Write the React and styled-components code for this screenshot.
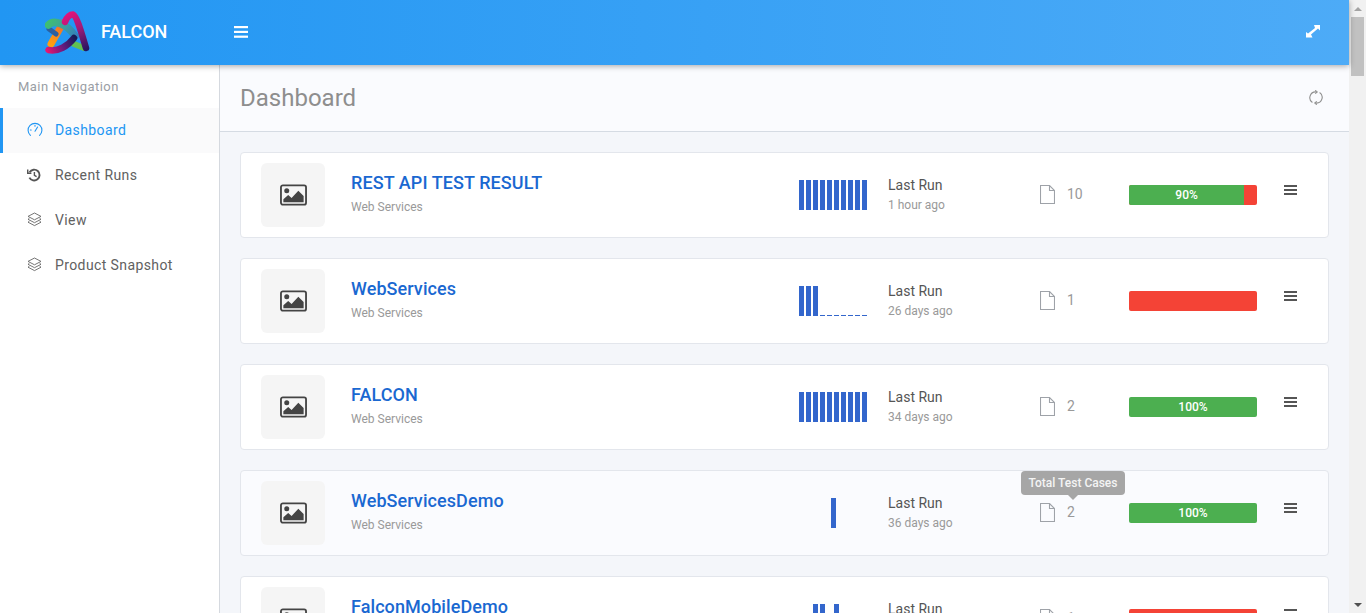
import React from 'react';
import styled, {createGlobalStyle} from 'styled-components';

const GlobalStyle = createGlobalStyle`
  html, body {
    margin: 0;
    height: 100%;
    overflow: hidden;
    font-family: Roboto, "Liberation Sans", sans-serif;
  }
`;

const Page = styled.div`
  display: flex;
  height: 100vh;
`;

const Shell = styled.div`
  flex: 1;
  min-width: 0;
  display: flex;
  flex-direction: column;
  position: relative;
`;

const Header = styled.header`
  height: 65px;
  flex: none;
  display: flex;
  align-items: center;
  box-sizing: border-box;
  background-image: linear-gradient(to right, #2196f3, #4dabf7);
  box-shadow: 0 1px 6px rgba(0, 0, 0, .35);
  position: relative;
  z-index: 2;
  padding: 0 29px 2px 0;
`;

const Brand = styled.div`
  width: 234px;
  display: flex;
  align-items: center;
  padding-left: 45px;
  box-sizing: border-box;
  color: #fff;
  font-size: 18px;
  font-weight: 500;
  gap: 11px;
`;

const LogoMark = styled.svg`
  margin-top: 2px;
`;

const HeaderButton = styled.button`
  border: 0;
  padding: 0;
  background: none;
  display: flex;
  margin-left: ${p => p.$right ? 'auto' : '0'};
`;

const Body = styled.div`
  flex: 1;
  min-height: 0;
  display: flex;
`;

const Sidebar = styled.aside`
  width: 220px;
  flex: none;
  box-sizing: border-box;
  background: #fff;
  border-right: 1px solid #d5d9df;
`;

const NavTitle = styled.div`
  height: 43px;
  box-sizing: border-box;
  padding: 14px 0 0 18px;
  font-size: 13px;
  line-height: 16px;
  letter-spacing: .45px;
  color: #9a9ea5;
`;

const NavItem = styled.a`
  height: 45px;
  display: flex;
  align-items: center;
  box-sizing: border-box;
  padding: 0 0 2px ${p => p.$active ? '24px' : '27px'};
  font-size: 14px;
  letter-spacing: .4px;
  color: ${p => p.$active ? '#2196f3' : '#616161'};
  background: ${p => p.$active ? '#fafafb' : 'transparent'};
  border-left: ${p => p.$active ? '3px solid #2196f3' : 'none'};
`;

const NavIcon = styled.span`
  width: 28px;
  flex: none;
  display: flex;
`;

const Main = styled.main`
  flex: 1;
  min-width: 0;
  background: #f4f6fa;
  overflow: hidden;
`;

const TitleBar = styled.div`
  height: 67px;
  box-sizing: border-box;
  display: flex;
  align-items: center;
  justify-content: space-between;
  padding: 0 26px 1px 20px;
  background: #fafbfe;
  border-bottom: 1px solid #d5dbe3;
`;

const PageTitle = styled.h1`
  margin: 0;
  font-size: 24px;
  font-weight: 400;
  color: #8e8e8e;
`;

const CardList = styled.div`
  display: flex;
  flex-direction: column;
  gap: 20px;
  padding: 20px 20px 0;
`;

const Card = styled.section`
  flex: none;
  display: grid;
  grid-template-columns: 90px 448px 89px 152px 89px 155px 1fr;
  align-items: center;
  box-sizing: border-box;
  height: 86px;
  padding: 10px 0 10px 20px;
  background: ${p => p.$hover ? '#fafbfe' : '#fff'};
  border: 1px solid #e3e6ec;
  border-radius: 4px;
`;

const Thumb = styled.div`
  width: 64px;
  height: 64px;
  border-radius: 6px;
  background: #f5f5f5;
  display: flex;
  align-items: center;
  justify-content: center;
`;

const TitleBlock = styled.div`
  padding-bottom: 2px;
`;

const CardTitle = styled.div`
  font-size: 18px;
  line-height: 22px;
  font-weight: 500;
  letter-spacing: .08px;
  color: #1a68d1;
  margin-bottom: 4px;
`;

const Muted = styled.div`
  font-size: 12px;
  line-height: 18px;
  color: #999;
`;

const Spark = styled.div`
  height: 30px;
  display: flex;
  align-items: flex-end;
  gap: 2px;
  padding-left: ${p => p.$offset || 0}px;
`;

const SparkBar = styled.span`
  width: 5px;
  height: ${p => p.$empty ? '1px' : '30px'};
  background: #3366cc;
  visibility: ${p => p.$gap ? 'hidden' : 'visible'};
`;

const RunBlock = styled.div`
  padding-bottom: 2px;
`;

const RunLabel = styled.div`
  font-size: 14px;
  line-height: 20px;
  color: #555;
  margin-bottom: 1px;
`;

const Cases = styled.div`
  display: flex;
  align-items: center;
  gap: 12px;
  position: relative;
  margin-bottom: 2px;
  font-size: 14px;
  color: #999;
`;

const Tooltip = styled.div`
  position: absolute;
  left: -19px;
  top: -32px;
  width: 104px;
  height: 24px;
  border-radius: 4px;
  background: #a6a6a6;
  color: #f4f4f4;
  font-size: 12px;
  font-weight: 500;
  line-height: 24px;
  text-align: center;

  &::after {
    content: '';
    position: absolute;
    left: 47px;
    top: 24px;
    border: 5px solid transparent;
    border-bottom: 0;
    border-top-color: #a6a6a6;
  }
`;

const Progress = styled.div`
  width: 128px;
  height: 20px;
  display: flex;
  border-radius: 2px;
  overflow: hidden;
  background: #f44336;
`;

const ProgressFill = styled.div`
  background: #4caf50;
  color: #fff;
  font-size: 12px;
  font-weight: 500;
  line-height: 20px;
  text-align: center;
`;

const MenuIcon = styled.div`
  width: 13px;
  margin-bottom: 10px;
  display: flex;
  flex-direction: column;
  gap: 2px;

  > span {
    height: 2px;
    background: #555;
  }
`;

const Scrollbar = styled.div`
  width: 17px;
  flex: none;
  background: #f1f1f1;
  display: flex;
  flex-direction: column;
  align-items: center;
  justify-content: space-between;
  position: relative;
`;

const ScrollArrow = styled.span`
  height: 17px;
  display: flex;
  align-items: center;

  &::before {
    content: '';
    border: 4px solid transparent;
    border-top: ${p => p.$down ? '4px solid #505050' : '0'};
    border-bottom: ${p => p.$down ? '0' : '4px solid #a3a3a3'};
  }
`;

const ScrollThumb = styled.div`
  position: absolute;
  top: 17px;
  left: 2px;
  width: 13px;
  height: 59px;
  background: #c1c1c1;
`;

const Logo = () => (
    <LogoMark width="45" height="44" viewBox="0 0 45 44" fill="none">
        <defs>
            <linearGradient id="lgPink" gradientUnits="userSpaceOnUse" x1="20" y1="2" x2="42" y2="40">
                <stop offset="0" stopColor="#e8127a"/>
                <stop offset=".45" stopColor="#a31a78"/>
                <stop offset="1" stopColor="#1d1560"/>
            </linearGradient>
            <linearGradient id="lgGreen" gradientUnits="userSpaceOnUse" x1="2" y1="12" x2="34" y2="28">
                <stop offset="0" stopColor="#3fbf70"/>
                <stop offset=".5" stopColor="#3a9fa0"/>
                <stop offset="1" stopColor="#3277c0"/>
            </linearGradient>
            <linearGradient id="lgBottom" gradientUnits="userSpaceOnUse" x1="2" y1="40" x2="30" y2="26">
                <stop offset="0" stopColor="#e8156f"/>
                <stop offset=".5" stopColor="#6a1a80"/>
                <stop offset="1" stopColor="#141a55"/>
            </linearGradient>
            <linearGradient id="lgOrange" gradientUnits="userSpaceOnUse" x1="6" y1="34" x2="18" y2="12">
                <stop offset="0" stopColor="#ffa010"/>
                <stop offset=".7" stopColor="#f57c20"/>
                <stop offset="1" stopColor="#e0406a"/>
            </linearGradient>
        </defs>
        <path d="M29 33 L39 37" stroke="#62c050" strokeWidth="6" strokeLinecap="round"/>
        <path d="M6 33 L18 12" stroke="url(#lgOrange)" strokeWidth="7" strokeLinecap="round"/>
        <path d="M4 18 L11 23" stroke="#2c5f9e" strokeWidth="5" strokeLinecap="round"/>
        <path d="M3.500 14 C9 8 22 13 30 25" stroke="url(#lgGreen)" strokeWidth="7.500" strokeLinecap="round"/>
        <path d="M3.500 39 C13 41 23 35 29 27" stroke="url(#lgBottom)" strokeWidth="6.500" strokeLinecap="round"/>
        <path d="M20 11 C22 6 25 3.500 28 3.500 C32 5 37 24 41 37" stroke="url(#lgPink)" strokeWidth="6.500" strokeLinecap="round"/>
    </LogoMark>
);

const BarsIcon = () => (
    <svg width="14" height="12" viewBox="0 0 14 12" fill="#fff">
        <rect y="0" width="14" height="2.2"/>
        <rect y="4.8" width="14" height="2.2"/>
        <rect y="9.6" width="14" height="2.2"/>
    </svg>
);

const ExpandIcon = () => (
    <svg width="14" height="13" viewBox="0 0 14 13" fill="#fff">
        <path d="M8 0h6v5.500l-2-2L5 9.500 6.500 12.500H0V7l2 1.500L9 3z"/>
    </svg>
);

const GaugeIcon = () => (
    <svg width="16" height="16" viewBox="0 0 16 16" fill="none" stroke="#2196f3" strokeWidth="1.1" strokeLinecap="round">
        <path d="M3.400 13.400A6.900 6.900 0 1 1 12.600 13.400"/>
        <path d="M8 9.200 10.600 5"/>
        <path d="M3.400 8h.8M8 3.400v.8"/>
    </svg>
);

const HistoryIcon = () => (
    <svg width="14" height="14" viewBox="0 0 14 14" fill="none" stroke="#555" strokeWidth="1.9">
        <path d="M2.600 4.200A5.400 5.400 0 1 1 2.400 9.600"/>
        <path d="M.7 1.600v3.700h3.700" strokeWidth="1.500"/>
        <path d="M7.400 4v3.400l2.200 1.200" strokeWidth="1.400"/>
    </svg>
);

const LayersIcon = () => (
    <svg width="15" height="15" viewBox="0 0 15 15" fill="none" stroke="#666" strokeWidth=".9" strokeLinejoin="round">
        <path d="M7.500 1 14 4.400 7.500 7.800 1 4.400z"/>
        <path d="M2.400 6.300 1 7.300l6.500 3.400L14 7.300l-1.400-1"/>
        <path d="M2.400 9.200 1 10.200l6.500 3.400 6.500-3.400-1.400-1"/>
    </svg>
);

const ReloadIcon = () => (
    <svg width="14" height="15" viewBox="0 0 14 15" fill="none" stroke="#8f8f8f" strokeWidth="1.1">
        <path d="M3.400 12.500A5.800 5.800 0 0 1 7 1.900"/>
        <path d="M10.600 2.500A5.800 5.800 0 0 1 7 13.100"/>
        <path d="M6.200 .3 8.200 1.900 6.200 3.600"/>
        <path d="M7.800 11.400 5.800 13.100 7.800 14.700"/>
    </svg>
);

const PictureIcon = () => (
    <svg width="27" height="22" viewBox="0 0 28 22">
        <rect x="1" y="1" width="26" height="20" rx="2" fill="none" stroke="#444" strokeWidth="1.9"/>
        <circle cx="7" cy="6.500" r="2.600" fill="#444"/>
        <path d="M3.500 18.500v-3l5-4.500 3.500 3 7-7.500 5.500 5.500v6.500z" fill="#444"/>
    </svg>
);

const FileIcon = () => (
    <svg width="15" height="19" viewBox="0 0 15 19" fill="none" stroke="#9ea2a8" strokeWidth="1.1">
        <path d="M.5.5h9l5 5v13H.5z"/>
        <path d="M9.500.5v5h5"/>
    </svg>
);

const Sparkline = ({bars, offset}) => (
    <Spark $offset={offset}>
        {bars.map((b, i) => <SparkBar key={i} $empty={b === 0} $gap={b === null}/>)}
    </Spark>
);

const cards = [
    {title: 'REST API TEST RESULT', bars: [1, 1, 1, 1, 1, 1, 1, 1, 1, 1], ago: '1 hour ago', count: 10, pass: 90},
    {title: 'WebServices', bars: [1, 1, 1, 0, 0, 0, 0, 0, 0, 0], ago: '26 days ago', count: 1, pass: 0},
    {title: 'FALCON', bars: [1, 1, 1, 1, 1, 1, 1, 1, 1, 1], ago: '34 days ago', count: 2, pass: 100},
    {title: 'WebServicesDemo', bars: [1], offset: 32, ago: '36 days ago', count: 2, pass: 100, hover: true},
    {title: 'FalconMobileDemo', bars: [1, 1, null, 1], offset: 14, ago: '40 days ago', count: 1, pass: 0},
];

export default function App() {
    return (
        <Page>
            <GlobalStyle/>
            <Shell>
                <Header>
                    <Brand><Logo/>FALCON</Brand>
                    <HeaderButton><BarsIcon/></HeaderButton>
                    <HeaderButton $right><ExpandIcon/></HeaderButton>
                </Header>
                <Body>
                    <Sidebar>
                        <NavTitle>Main Navigation</NavTitle>
                        <NavItem $active><NavIcon><GaugeIcon/></NavIcon>Dashboard</NavItem>
                        <NavItem><NavIcon><HistoryIcon/></NavIcon>Recent Runs</NavItem>
                        <NavItem><NavIcon><LayersIcon/></NavIcon>View</NavItem>
                        <NavItem><NavIcon><LayersIcon/></NavIcon>Product Snapshot</NavItem>
                    </Sidebar>
                    <Main>
                        <TitleBar>
                            <PageTitle>Dashboard</PageTitle>
                            <ReloadIcon/>
                        </TitleBar>
                        <CardList>
                            {cards.map(c => (
                                <Card key={c.title} $hover={c.hover}>
                                    <Thumb><PictureIcon/></Thumb>
                                    <TitleBlock>
                                        <CardTitle>{c.title}</CardTitle>
                                        <Muted>Web Services</Muted>
                                    </TitleBlock>
                                    <Sparkline bars={c.bars} offset={c.offset}/>
                                    <RunBlock>
                                        <RunLabel>Last Run</RunLabel>
                                        <Muted>{c.ago}</Muted>
                                    </RunBlock>
                                    <Cases>
                                        {c.hover && <Tooltip>Total Test Cases</Tooltip>}
                                        <FileIcon/>{c.count}
                                    </Cases>
                                    <Progress>
                                        {c.pass > 0 && <ProgressFill style={{width: `${c.pass}%`}}>{c.pass}%</ProgressFill>}
                                    </Progress>
                                    <MenuIcon><span/><span/><span/></MenuIcon>
                                </Card>
                            ))}
                        </CardList>
                    </Main>
                </Body>
            </Shell>
            <Scrollbar>
                <ScrollArrow/>
                <ScrollThumb/>
                <ScrollArrow $down/>
            </Scrollbar>
        </Page>
    );
}
